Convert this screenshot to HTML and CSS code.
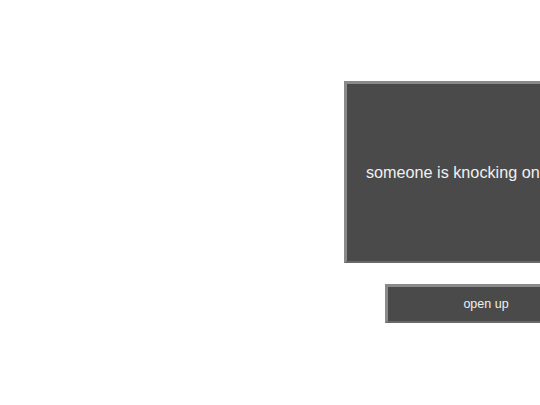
FILE: index.html
```html
<!DOCTYPE html>
<html lang="en">

<head>
    <meta charset="UTF-8">
    <meta name="viewport" content="width=device-width, initial-scale=1.0">
    <title>Knock Knock</title>
    <link rel="stylesheet" href="styles.css">
</head>

<body>

    <div class="stage">
        <div class="message">
            <div class="line">someone is knocking on</div>
        </div>
        <button class="openBtn">open up</button>
    </div>

</body>

</html>
```

FILE: styles.css
```css
html, body {
    margin: 0;
    padding: 0;
    overflow: hidden;
    background-color: #fff;
    font-family: "Liberation Sans", Arial, sans-serif;
}

.stage {
    width: 540px;
    height: 405px;
    overflow: hidden;
    padding: 81px 0 0 344px;
    box-sizing: border-box;
    display: flex;
    flex-direction: column;
    align-items: flex-start;
}

.message {
    flex-shrink: 0;
    width: 320px;
    height: 182px;
    box-sizing: border-box;
    background-color: #4a4a4a;
    border: 3px solid #8c8989;
    border-bottom: 2px solid #6a6868;
    display: flex;
    align-items: center;
    padding-left: 19px;
    padding-bottom: 1px;
}

.line {
    color: #f0f0f0;
    font-size: 16.2px;
    white-space: nowrap;
}

.openBtn {
    flex-shrink: 0;
    margin: 21px 0 0 41px;
    width: 202px;
    height: 39px;
    box-sizing: border-box;
    background-color: #4a4a4a;
    border: 3px solid #8c8989;
    border-bottom: 2px solid #6a6868;
    color: #f0f0f0;
    font-family: "Liberation Sans", Arial, sans-serif;
    font-size: 12.5px;
    padding: 0;
    cursor: pointer;
}
```
